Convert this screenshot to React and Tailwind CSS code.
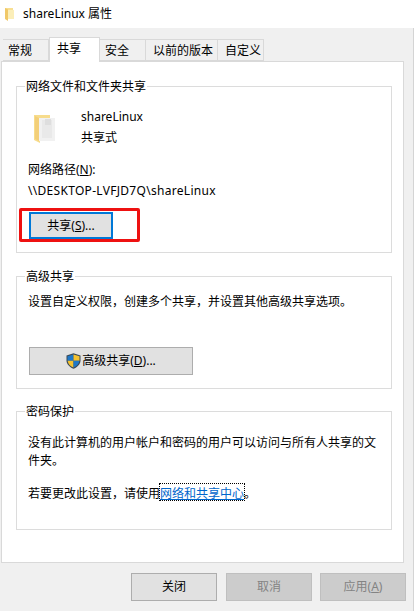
import React from 'react';

function Group({ title, className, children }) {
  return (
    <div className={`relative mx-[14px] w-[376px] border border-[#dcdcdc] ${className}`}>
      <span className="absolute left-[8px] top-[-9px] bg-white px-[1px] text-[12px] leading-[18px] text-black">{title}</span>
      {children}
    </div>
  );
}

function Tab({ label, active, className }) {
  if (active) {
    return (
      <div className={`relative z-10 h-[25px] w-[51px] border border-b-0 border-[#d9d9d9] bg-white pl-[7px] pt-[2px] text-[12px] leading-[18px] text-black ${className}`}>
        {label}
      </div>
    );
  }
  return (
    <div className={`mt-[2px] h-[22px] border border-l-0 border-[#d9d9d9] bg-[#f0f0f0] pt-[2px] text-[12px] leading-[18px] text-black ${className}`}>
      {label}
    </div>
  );
}

function Shield() {
  return (
    <svg width="15" height="16" viewBox="0 0 15 16" className="shrink-0">
      <path d="M7.5 0.3 L14.5 2.6 V7.5 C14.5 11.5 11 14.3 7.5 15.8 C4 14.3 0.5 11.5 0.5 7.5 V2.6 Z" fill="#3c4a55" />
      <path d="M7.5 1.4 V7.7 H1.5 V3.3 Z" fill="#1f78c8" />
      <path d="M7.5 1.4 L13.5 3.3 V7.7 H7.5 Z" fill="#f5c22e" />
      <path d="M1.6 7.7 H7.5 V14.5 C4.5 13.3 1.9 11 1.6 7.7 Z" fill="#f5c22e" />
      <path d="M7.5 7.7 H13.4 C13.1 11 10.5 13.3 7.5 14.5 Z" fill="#1f78c8" />
    </svg>
  );
}

function SmallFolder() {
  return (
    <svg width="9" height="13" viewBox="0 0 9 13" className="shrink-0">
      <path d="M0 0 H8 V11 H0 Z" fill="#f8df92" />
      <path d="M0 0 L3 1.5 V13 L0 11 Z" fill="#f0c868" />
      <path d="M3 2 H9 V11 H3 Z" fill="#fbeeb9" />
    </svg>
  );
}

function BigFolder() {
  return (
    <svg width="22" height="29" viewBox="0 0 22 29" className="mt-[7px] shrink-0">
      <path d="M0 0 H16 V3 H6 V28 L0 25 Z" fill="#f7dc8c" />
      <path d="M1 1 L5 3 V26 L1 24 Z" fill="#f3cf78" />
      <path d="M5 3 H21 V26 H5 Z" fill="#f1f1f1" />
      <path d="M8 5 H18 V23 H8 Z" fill="#e9e9e9" />
      <path d="M11 4 H17 V10 H11 Z" fill="#dedede" />
    </svg>
  );
}

function Button({ children, className }) {
  return (
    <div className={`flex items-center justify-center text-[12px] leading-[18px] ${className}`}>
      {children}
    </div>
  );
}

export default function App() {
  return (
    <div
      className="h-[611px] w-[418px] overflow-hidden bg-white"
      style={{ fontFamily: '"Noto Sans", "Noto Sans CJK SC", sans-serif' }}
    >
      {/* title bar */}
      <div className="flex h-[28px] items-center gap-[9px] pl-[5px] text-[12px] text-black">
        <SmallFolder />
        <span>shareLinux 属性</span>
      </div>

      <div className="h-[583px] w-[414px] border-r border-[#d4d4d4] bg-[#f0f0f0] pl-[1px] pt-[9px]">
        {/* tabs */}
        <div className="relative z-10 flex h-[24px] items-start pl-[2px]">
          <Tab label="常规" className="w-[46px] border-l pl-[5px]" />
          <Tab label="共享" active />
          <Tab label="安全" className="w-[46px] pl-[5px]" />
          <Tab label="以前的版本" className="w-[72px] pl-[7px]" />
          <Tab label="自定义" className="w-[46px] pl-[7px]" />
        </div>

        {/* tab page */}
        <div className="h-[502px] w-[403px] border border-[#d9d9d9] bg-white pt-[24px]">
          <Group title="网络文件和文件夹共享" className="h-[167px]">
            <div className="flex pl-[17px] pt-[21px]">
              <BigFolder />
              <div className="pl-[25px] text-[12px] leading-[18px] text-black">
                <div>shareLinux</div>
                <div className="pt-[3px]">共享式</div>
              </div>
            </div>
            <div className="pl-[11px] pt-[14px] text-[12px] leading-[18px] text-black">
              网络路径(<span className="underline">N</span>):
            </div>
            <div className="pl-[11px] pt-[3px] text-[12px] leading-[18px] tracking-[0.3px] text-black">\\DESKTOP-LVFJD7Q\shareLinux</div>
            <div className="ml-[2px] mt-[8px] h-[34px] w-[121px] rounded-[2px] border-[3px] border-[#ee1111] pl-[7px] pt-[1px]">
              <Button className="h-[27px] w-[84px] border-2 border-[#0078d7] bg-[#e1e1e1] text-black">
                共享(<span className="underline">S</span>)...
              </Button>
            </div>
          </Group>

          <Group title="高级共享" className="mt-[23px] h-[113px]">
            <div className="pl-[11px] pt-[16px] text-[12px] leading-[18px] text-black">
              设置自定义权限，创建多个共享，并设置其他高级共享选项。
            </div>
            <Button className="ml-[12px] mt-[36px] h-[28px] w-[164px] gap-[1px] border border-[#adadad] bg-[#e1e1e1] text-black">
              <Shield />
              <span>
                高级共享(<span className="underline">D</span>)...
              </span>
            </Button>
          </Group>

          <Group title="密码保护" className="mt-[22px] h-[119px]">
            <div className="pl-[11px] pr-[14px] pt-[22px] text-[12px] leading-[18px] text-black">
              没有此计算机的用户帐户和密码的用户可以访问与所有人共享的文件夹。
            </div>
            <div className="flex items-start pl-[11px] pt-[15px] text-[12px] leading-[18px] text-black">
              <span>若要更改此设置，请使用</span>
              <span className="-mt-[1px] h-[16px] pt-[1px] leading-[18px] text-[#0066cc] underline outline-1 outline-dotted outline-black">网络和共享中心</span>
              <span>。</span>
            </div>
          </Group>
        </div>

        {/* footer buttons */}
        <div className="flex justify-end pr-[7px] pt-[10px]">
          <Button className="h-[28px] w-[86px] border border-[#adadad] bg-[#e1e1e1] text-black">关闭</Button>
          <Button className="ml-[9px] h-[28px] w-[86px] border border-[#bfbfbf] bg-[#cccccc] text-[#838383]">取消</Button>
          <Button className="ml-[8px] h-[28px] w-[86px] border border-[#bfbfbf] bg-[#cccccc] text-[#838383]">
            应用(<span className="underline">A</span>)
          </Button>
        </div>
      </div>
    </div>
  );
}
